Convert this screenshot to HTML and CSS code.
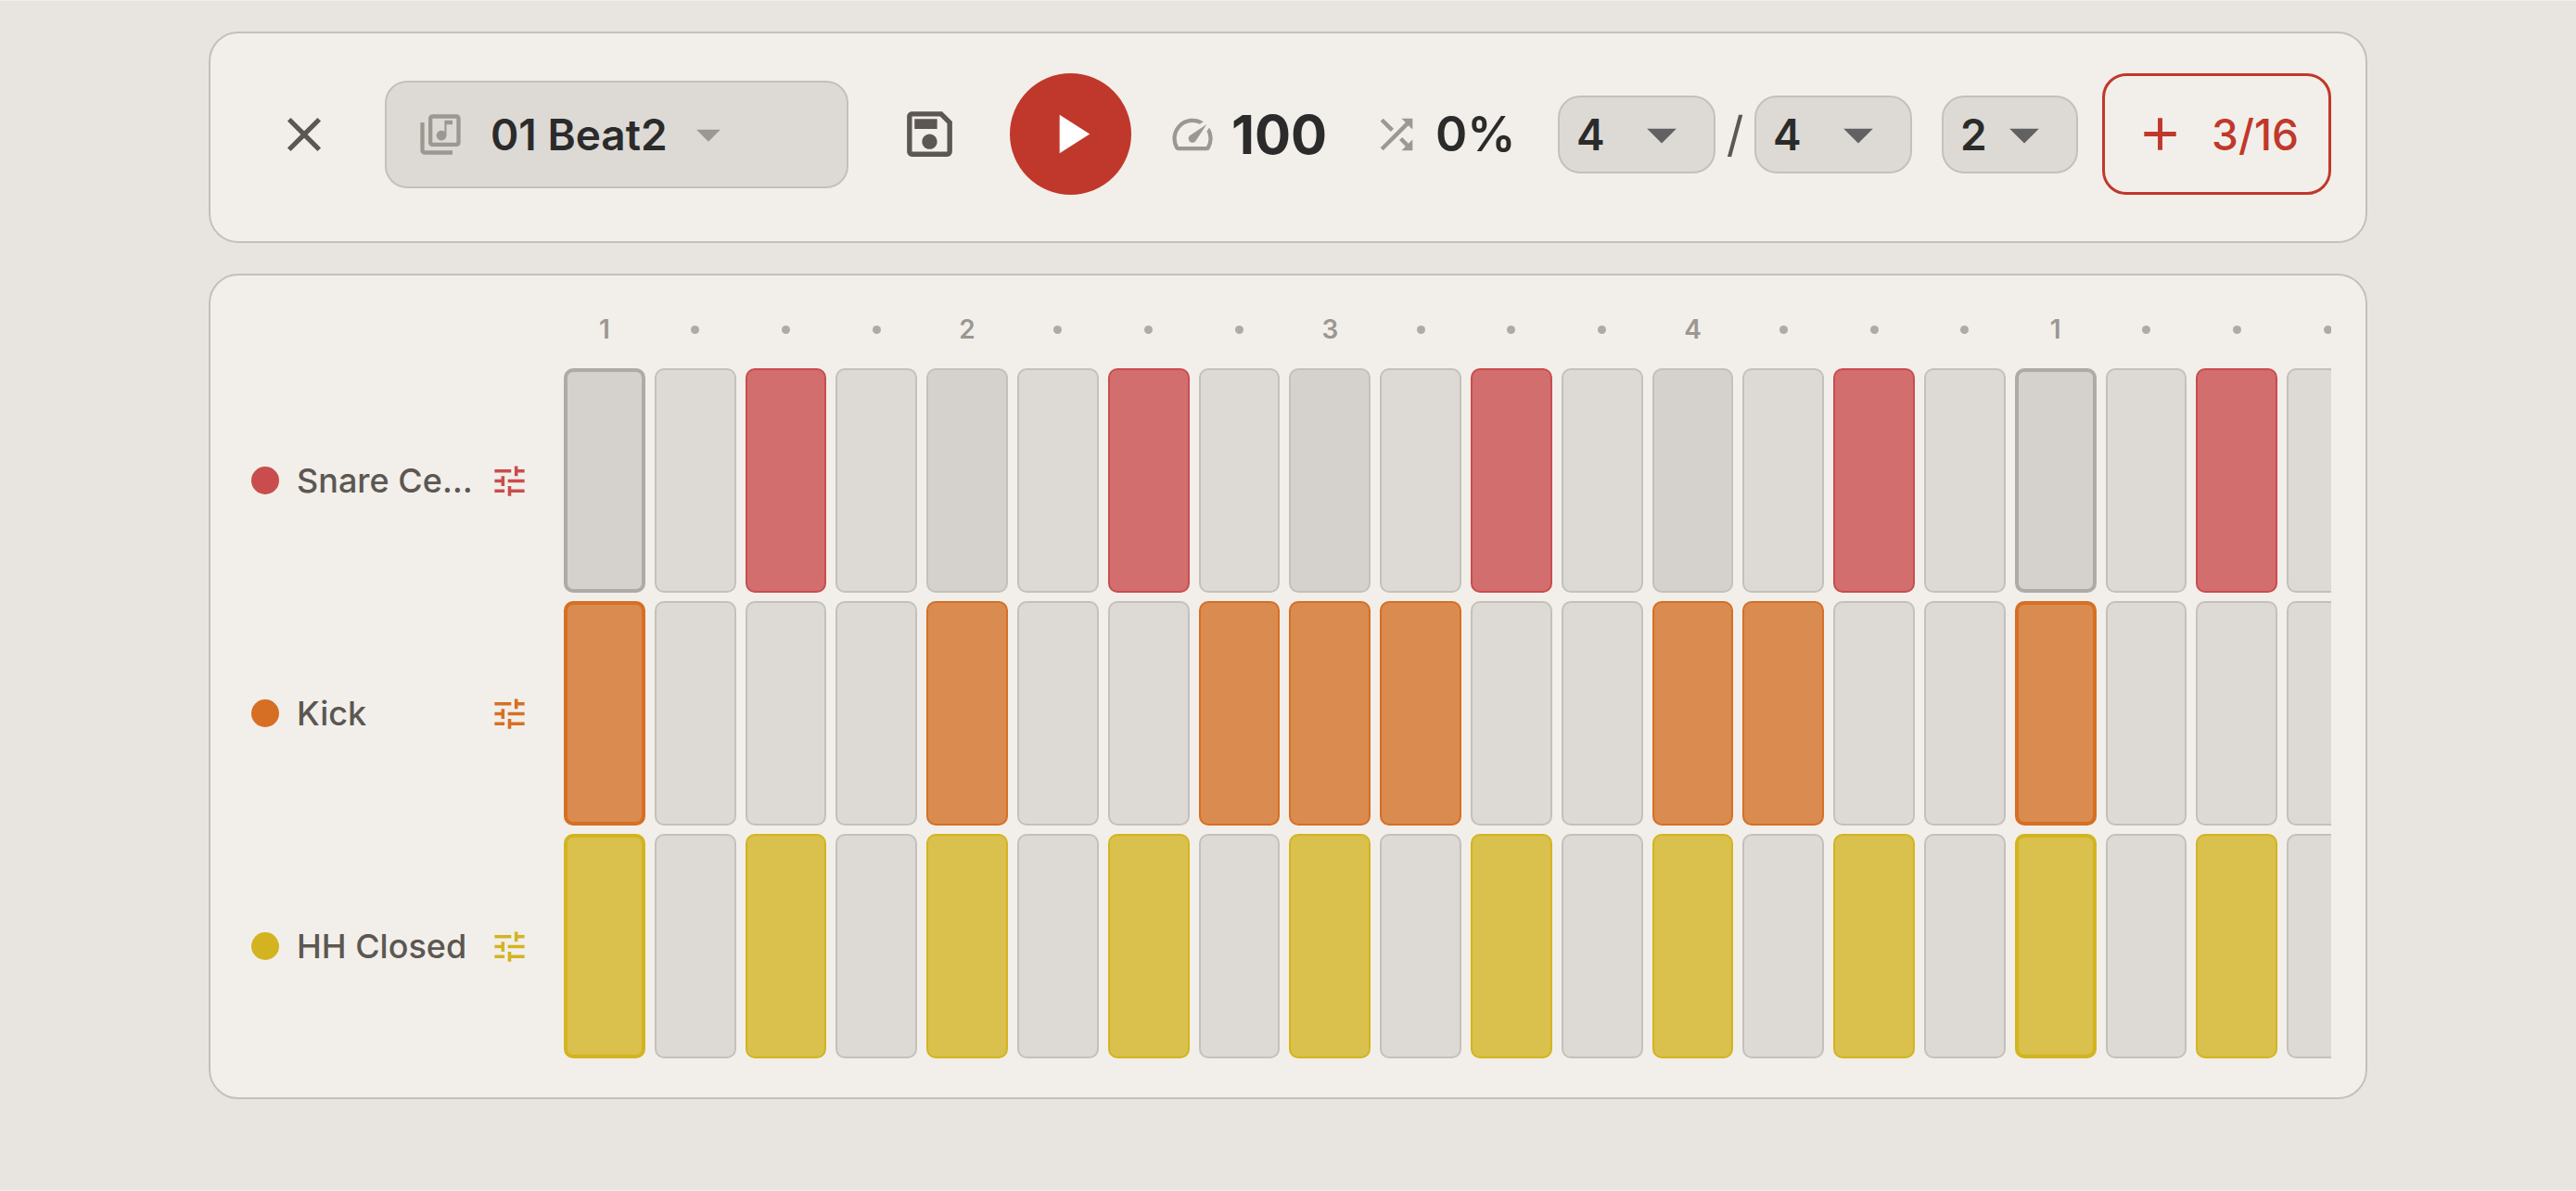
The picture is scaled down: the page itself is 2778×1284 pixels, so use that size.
FILE: index.html
```html
<!DOCTYPE html>
<html lang="en">
<head>
    <meta charset="UTF-8">
    <meta name="viewport" content="width=device-width, initial-scale=1.0">
    <title>Beat Sequencer</title>
    <link rel="stylesheet" href="styles.css">
</head>
<body>
    <header class="panel toolbar">
        <button class="icon-button" aria-label="Close">
            <svg class="icon-close" viewBox="0 0 24 24"><path d="M19 6.41L17.59 5 12 10.59 6.41 5 5 6.41 10.59 12 5 17.59 6.41 19 12 13.41 17.59 19 19 17.59 13.41 12z"/></svg>
        </button>

        <div class="beat-select">
            <svg class="icon-small" viewBox="0 0 24 24"><path d="M20 2H8c-1.1 0-2 .9-2 2v12c0 1.1.9 2 2 2h12c1.1 0 2-.9 2-2V4c0-1.1-.9-2-2-2zm0 14H8V4h12v12zm-7.5-1c1.38 0 2.5-1.12 2.5-2.5V7h3V5h-4v5.51c-.42-.32-.93-.51-1.5-.51-1.38 0-2.5 1.12-2.5 2.5s1.12 2.5 2.5 2.5zM4 6H2v14c0 1.1.9 2 2 2h14v-2H4V6z"/></svg>
            <select aria-label="Beat">
                <option>01 Beat2</option>
            </select>
            <svg class="icon-close" viewBox="0 0 24 24"><path d="M7 10l5 5 5-5z"/></svg>
        </div>

        <button class="icon-button" aria-label="Save">
            <svg class="icon-save" viewBox="0 0 24 24"><path d="M17 3H5c-1.11 0-2 .9-2 2v14c0 1.1.89 2 2 2h14c1.1 0 2-.9 2-2V7l-4-4zm2 16H5V5h11.17L19 7.83V19zm-7-7c-1.66 0-3 1.34-3 3s1.34 3 3 3 3-1.34 3-3-1.34-3-3-3zM6 6h9v4H6z"/></svg>
        </button>
        <button class="play-button" aria-label="Play">
            <svg viewBox="0 0 24 24"><path d="M8 5v14l11-7z"/></svg>
        </button>

        <div class="readings">
            <button class="reading tempo" aria-label="Tempo 100">
                <svg class="icon-small" viewBox="0 0 24 24"><path d="M20.38 8.57l-1.23 1.85a8 8 0 0 1-.22 7.58H5.07A8 8 0 0 1 15.58 6.85l1.85-1.23A10 10 0 0 0 3.35 19a2 2 0 0 0 1.72 1h13.85a2 2 0 0 0 1.74-1 10 10 0 0 0-.27-10.44zm-9.79 6.84a2 2 0 0 0 2.83 0l5.66-8.49-8.49 5.66a2 2 0 0 0 0 2.83z"/></svg>
                <span>100</span>
            </button>
            <button class="reading swing" aria-label="Swing 0%">
                <svg class="icon-small" viewBox="0 0 24 24"><path d="M10.59 9.17L5.41 4 4 5.41l5.17 5.17 1.42-1.41zM14.5 4l2.04 2.04L4 18.59 5.41 20 17.96 7.46 20 9.5V4h-5.5zm.33 9.41l-1.41 1.41 3.13 3.13L14.5 20H20v-5.5l-2.04 2.04-3.13-3.13z"/></svg>
                <span>0%</span>
            </button>
        </div>

        <div class="meter">
            <div class="number-select">
                <select aria-label="Beats per bar">
                    <option>4</option>
                </select>
                <svg viewBox="0 0 24 24"><path d="M7 10l5 5 5-5z"/></svg>
            </div>
            <span class="slash">/</span>
            <div class="number-select">
                <select aria-label="Beat unit">
                    <option>4</option>
                </select>
                <svg viewBox="0 0 24 24"><path d="M7 10l5 5 5-5z"/></svg>
            </div>
        </div>
        <div class="number-select bars">
            <select aria-label="Bars">
                <option>2</option>
            </select>
            <svg viewBox="0 0 24 24"><path d="M7 10l5 5 5-5z"/></svg>
        </div>

        <button class="add-button">
            <svg viewBox="0 0 24 24"><path d="M19 13h-6v6h-2v-6H5v-2h6V5h2v6h6v2z"/></svg>
            <span>3/16</span>
        </button>
    </header>

    <main class="panel sequencer">
        <div class="tracks">
            <div class="track snare">
                <span class="track-dot"></span>
                <span class="track-name">Snare Ce…</span>
                <button class="track-settings" aria-label="Snare settings"></button>
            </div>
            <div class="track kick">
                <span class="track-dot"></span>
                <span class="track-name">Kick</span>
                <button class="track-settings" aria-label="Kick settings"></button>
            </div>
            <div class="track hihat">
                <span class="track-dot"></span>
                <span class="track-name">HH Closed</span>
                <button class="track-settings" aria-label="HH Closed settings"></button>
            </div>
        </div>
        <div class="steps-view">
            <div class="steps" id="steps"></div>
        </div>
    </main>

    <script src="script.js"></script>
</body>
</html>
```

FILE: styles.css
```css
* {
    box-sizing: border-box;
}
body {
    margin: 0;
    min-height: 100vh;
    padding: 33px 225px;
    border-top: 1px solid #f0eee9;
    border-bottom: 1px solid #f0eee9;
    background-color: #e8e5e0;
    color: #2b2b2b;
    font-family: Inter, sans-serif;
}
button, select {
    margin: 0;
    padding: 0;
    border: none;
    background: none;
    color: inherit;
    font-family: inherit;
    cursor: pointer;
}
select {
    appearance: none;
}
svg {
    display: block;
    flex-shrink: 0;
    fill: currentColor;
}
.panel {
    display: flex;
    border: 2px solid #c4c0ba;
    border-radius: 32px;
    background-color: #f2efea;
}

/* Toolbar */
.toolbar {
    align-items: center;
    gap: 26px;
    margin-bottom: 33px;
    padding: 43px 37px 50px 40px;
}
.icon-button {
    display: flex;
    justify-content: center;
    width: 122px;
    color: #5c5752;
}
.icon-close {
    width: 62px;
    height: 62px;
}
.icon-save {
    width: 65px;
    height: 65px;
}
.icon-small {
    width: 52px;
    height: 52px;
    color: #9c9791;
}
.beat-select {
    display: flex;
    flex: 1;
    align-items: center;
    height: 116px;
    padding: 0 32px;
    border: 2px solid #c4c0ba;
    border-radius: 24px;
    background-color: #dddad5;
    color: #9c9791;
}
.beat-select select {
    width: 204px;
    margin-left: 28px;
    color: #2b2b2b;
    font-size: 46px;
    font-weight: 600;
}
.play-button {
    display: flex;
    align-items: center;
    justify-content: center;
    width: 131px;
    height: 131px;
    border-radius: 50%;
    background-color: #c0382b;
    color: #fff;
}
.play-button svg {
    width: 71px;
    height: 71px;
}
.readings {
    display: flex;
    gap: 42px;
    padding-left: 14px;
}
.reading {
    display: flex;
    align-items: center;
    gap: 16px;
}
.tempo {
    min-width: 178px;
    font-size: 58px;
    font-weight: 700;
}
.swing {
    min-width: 158px;
    font-size: 52px;
    font-weight: 600;
}
.meter {
    display: flex;
    align-items: center;
    padding: 0 6px 0 16px;
}
.slash {
    width: 42px;
    color: #5c5752;
    font-size: 52px;
    text-align: center;
}
.number-select {
    display: flex;
    align-items: center;
    width: 170px;
    height: 84px;
    padding: 0 18px;
    border: 2px solid #c4c0ba;
    border-radius: 24px;
    background-color: #dddad5;
}
.number-select select {
    flex: 1;
    min-width: 0;
    font-size: 46px;
    font-weight: 600;
}
.number-select svg {
    width: 76px;
    height: 76px;
    color: #616161;
}
.bars {
    width: 147px;
}
.add-button {
    display: flex;
    align-items: center;
    justify-content: space-between;
    width: 247px;
    height: 131px;
    padding: 0 32px 0 30px;
    border: 3px solid #c0382b;
    border-radius: 26px;
    color: #c0382b;
    font-size: 46px;
    font-weight: 500;
}
.add-button svg {
    width: 59px;
    height: 59px;
}

/* Sequencer */
.sequencer {
    padding: 28px 37px 42px 44px;
}
.tracks {
    display: flex;
    flex-direction: column;
    gap: 9px;
    width: 337px;
    padding-top: 72px;
}
.track {
    display: flex;
    align-items: center;
    height: 242px;
}
.snare {
    --color: #c94d4d;
    --fill: #d26e6e;
}
.kick {
    --color: #d66f24;
    --fill: #da8b4f;
}
.hihat {
    --color: #d3b420;
    --fill: #dac04c;
}
.track-dot {
    width: 30px;
    height: 30px;
    border-radius: 50%;
    background-color: var(--color);
}
.track-name {
    flex: 1;
    padding-left: 19px;
    color: #5c5752;
    font-size: 36px;
    font-weight: 500;
    white-space: nowrap;
}
.track-settings {
    margin-right: 37px;
    color: var(--color);
}
.track-settings svg {
    width: 43px;
    height: 43px;
}
.steps-view {
    flex: 1;
    min-width: 0;
    overflow: hidden;
}
.steps {
    width: 1946px;
}
.step-row {
    display: grid;
    grid-template-columns: repeat(20, 1fr);
    column-gap: 10px;
    height: 242px;
    margin-bottom: 9px;
}
.step-row:last-child {
    margin-bottom: 0;
}
.count-row {
    height: 60px;
    margin-bottom: 12px;
    align-items: center;
    justify-items: center;
    color: #9c9791;
    font-size: 28px;
    font-weight: 600;
}
.count-dot {
    width: 9px;
    height: 9px;
    border-radius: 50%;
    background-color: #aeaba5;
}
.step {
    border: 2px solid #c4c0ba;
    border-radius: 10px;
    background-color: #dddad5;
}
.step.beat {
    background-color: #d5d2cd;
}
.step.bar-start {
    border: 4px solid #aeaaa5;
}
.step.on {
    border-color: var(--color);
    background-color: var(--fill);
}
```

FILE: script.js
```js
const stepsPerBar = 16;
const stepCount = 20;

const tracks = [
    { name: 'snare', hits: [2, 6, 10, 14] },
    { name: 'kick', hits: [0, 4, 7, 8, 9, 12, 13] },
    { name: 'hihat', hits: [0, 2, 4, 6, 8, 10, 12, 14] }
];

const tuneIcon = '<svg viewBox="0 0 24 24"><path d="M3 17v2h6v-2H3zM3 5v2h10V5H3zm10 16v-2h8v-2h-8v-2h-2v6h2zM7 9v2H3v2h4v2h2V9H7zm14 4v-2H11v2h10zm-6-4h2V7h4V5h-4V3h-2v6z"/></svg>';

function addCountRow(container) {
    const row = document.createElement('div');
    row.className = 'step-row count-row';
    for (let i = 0; i < stepCount; i++) {
        const mark = document.createElement('span');
        if (i % 4 === 0) {
            mark.textContent = (i % stepsPerBar) / 4 + 1;
        } else {
            mark.className = 'count-dot';
        }
        row.appendChild(mark);
    }
    container.appendChild(row);
}

function addTrackRow(container, track) {
    const row = document.createElement('div');
    row.className = 'step-row ' + track.name;
    for (let i = 0; i < stepCount; i++) {
        const pos = i % stepsPerBar;
        const step = document.createElement('button');
        step.className = 'step';
        step.setAttribute('aria-label', track.name + ' step ' + (i + 1));
        if (pos % 4 === 0) step.classList.add('beat');
        if (pos === 0) step.classList.add('bar-start');
        if (track.hits.includes(pos)) step.classList.add('on');
        step.addEventListener('click', () => step.classList.toggle('on'));
        row.appendChild(step);
    }
    container.appendChild(row);
}

const steps = document.getElementById('steps');
addCountRow(steps);
tracks.forEach(track => addTrackRow(steps, track));

document.querySelectorAll('.track-settings').forEach(button => {
    button.innerHTML = tuneIcon;
});
```
